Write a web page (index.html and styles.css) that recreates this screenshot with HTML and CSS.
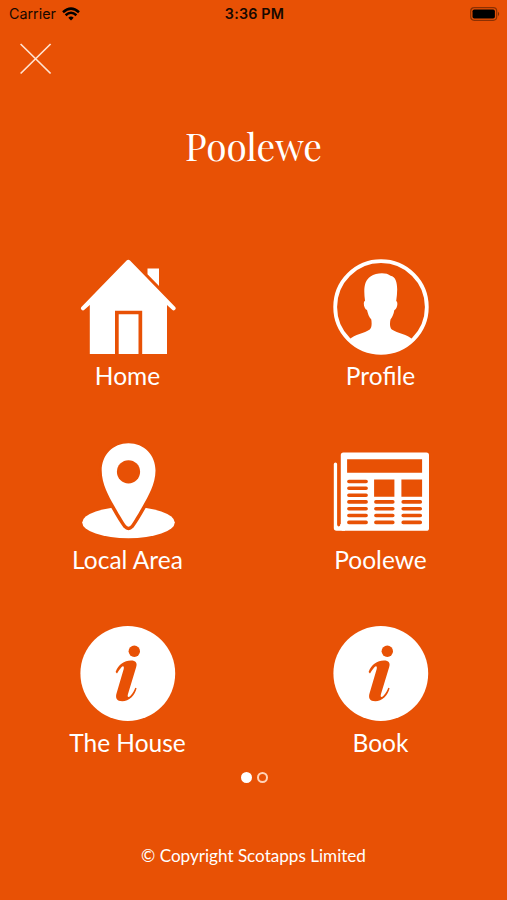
FILE: index.html
```html
<!DOCTYPE html>
<html lang="en">
<head>
  <meta charset="UTF-8" />
  <meta name="viewport" content="width=device-width, initial-scale=1" />
  <title>Poolewe</title>
  <link rel="stylesheet" href="styles.css">
</head>
<body>
  <div class="status-bar">
    <div class="status-left">
      <span>Carrier</span>
      <svg class="wifi" viewBox="0 0 18 14">
        <path d="M9 13.5 L6.3 10.7 Q9 8.5 11.7 10.7 Z" fill="#000" />
        <path d="M3.6 8.2 Q9 3.4 14.4 8.2 M1 5.2 Q9 -2 17 5.2" fill="none" stroke="#000" stroke-width="2.5" />
      </svg>
    </div>
    <div class="status-time">3:36 PM</div>
    <div class="status-right">
      <svg class="battery" viewBox="0 0 30 14">
        <rect x="0.7" y="0.7" width="26" height="12.6" rx="3.5" fill="none" stroke="#000" stroke-opacity="0.4" stroke-width="1.2" />
        <rect x="2.5" y="2.5" width="22.4" height="9" rx="1.8" />
        <path d="M28 4.8 Q30.4 7 28 9.2 Z" fill-opacity="0.45" />
      </svg>
    </div>
  </div>

  <button class="close-btn" aria-label="Close">
    <svg viewBox="0 0 32 32"><path d="M0.6 1 L30.6 30.5 M30.6 1 L0.6 30.5" /></svg>
  </button>

  <h1>Poolewe</h1>

  <nav class="menu">
    <a href="#" class="menu-item">
      <svg class="icon" viewBox="0 0 96 96">
        <path d="M46.600 1.600 Q48.300 0 50 1.600 L95.200 48 Q96.400 49.500 95 50.800 Q93.600 52 92.200 50.800 L87 46 V95 H62.200 V51.700 H35 V95 H9.800 V46 L4.400 50.800 Q3 52 1.600 50.800 Q0.200 49.500 1.400 48 Z" />
        <path d="M38.700 55.300 H58.500 V95 H38.700 Z M67.500 9.500 H79 V27 L67.500 15.200 Z" />
      </svg>
      <span>Home</span>
    </a>
    <a href="#" class="menu-item">
      <svg class="icon" viewBox="0 0 96 96">
        <circle cx="48" cy="48" r="45.800" fill="none" stroke="#fff" stroke-width="3.800" />
        <path d="M16.500 80.500 C21.500 75 31.500 74.500 36.800 70.500 C39 68.500 38.800 64 38.300 60.500 C36 58 34.800 54.500 34 51 C31 50 29.700 43 32 41.800 C30.500 30 31 22 37.500 17.500 C43.500 13.500 53.500 13.300 57.500 16.800 C65 18 65 30 63.200 42 C65.500 43 64.100 50.500 61.300 51.300 C60.700 55 59.500 58 57.500 60.500 C56.800 64 56.500 68.500 58.800 70.500 C64.500 74.500 74.500 75 79.500 80.500 C62.500 98.500 33.500 98.500 16.500 80.500 Z" />
      </svg>
      <span>Profile</span>
    </a>
    <a href="#" class="menu-item">
      <svg class="icon" viewBox="0 0 96 96">
        <ellipse cx="48.500" cy="79.500" rx="46.300" ry="15.700" />
        <path class="pin" d="M48.500 1.700 C33 1.700 21.700 13 21.700 28.500 C21.700 42 29 54.500 34 63.500 C38.500 71.500 43 79 46 82.800 Q48.500 85.500 51 82.800 C54 79 58.500 71.500 63 63.500 C68 54.500 75.500 42 75.500 28.500 C75.500 13 64 1.700 48.500 1.700 Z" />
        <path d="M48.500 0.200 C33 0.200 21.700 12 21.700 27.500 C21.700 41 29 53.500 34 62.500 C38.500 70.500 43 78 46 82.300 Q48.500 85 51 82.300 C54 78 58.500 70.500 63 62.500 C68 53.500 75.500 41 75.500 27.500 C75.500 12 64 0.200 48.500 0.200 Z" />
        <circle class="cut" cx="48.500" cy="28.800" r="11.600" />
      </svg>
      <span>Local Area</span>
    </a>
    <a href="#" class="menu-item">
      <svg class="icon" viewBox="0 0 96 96">
        <rect x="7.800" y="9.500" width="88.200" height="78.300" rx="2.600" />
        <path d="M0.800 21 Q0.800 19.500 2.500 19.500 Q4.100 19.500 4.100 21 V81.500 Q4.300 83.500 5.800 83.500 Q7.400 83.300 7.400 81 L12 80 V87.800 H3.600 Q0.800 87.800 0.800 85 Z" />
        <path class="cut" d="M14.100 16.200 H89.100 V29.800 H14.100 Z M41.100 36.500 H61.400 V53.800 H41.100 Z M68.400 36.500 H89.100 V53.800 H68.400 Z" />
        <path class="lines" d="M15.900 38.500 H33.100 M15.900 45.200 H33.100 M15.900 52.200 H33.100 M15.900 58.900 H33.100 M15.900 65.700 H33.100 M15.900 72.500 H33.100 M15.900 79.400 H33.100 M42.900 58.900 H59.800 M42.900 65.700 H59.800 M42.900 72.500 H59.800 M42.900 79.400 H59.800 M70.200 58.900 H87.300 M70.200 65.700 H87.300 M70.200 72.500 H87.300 M70.200 79.400 H87.300" />
      </svg>
      <span>Poolewe</span>
    </a>
    <a href="#" class="menu-item">
      <svg class="icon" viewBox="0 0 96 96">
        <circle cx="47.800" cy="47.500" r="47.400" />
        <circle class="cut" cx="54.300" cy="25.300" r="5.700" />
        <path class="cut" d="M35.600 46 C38.500 38.500 44 34.500 51 34.500 C55.800 34.500 57.500 37 56.200 41 L48 68 C47 71.500 48.500 71.800 50.500 69.800 C53 67 54.300 64.500 55.300 61.700 L56.600 62.300 C55 69.500 49 75.200 42.300 75.200 C36.700 75.200 35.200 72 36.500 67.500 L43.700 43 C44.300 40 43 39.500 41.200 41.500 C39.500 43.300 38.100 45.500 37 47.500 Z" />
      </svg>
      <span>The House</span>
    </a>
    <a href="#" class="menu-item">
      <svg class="icon" viewBox="0 0 96 96">
        <circle cx="47.800" cy="47.500" r="47.400" />
        <circle class="cut" cx="54.300" cy="25.300" r="5.700" />
        <path class="cut" d="M35.600 46 C38.500 38.500 44 34.500 51 34.500 C55.800 34.500 57.500 37 56.200 41 L48 68 C47 71.500 48.500 71.800 50.500 69.800 C53 67 54.300 64.500 55.300 61.700 L56.600 62.300 C55 69.500 49 75.200 42.300 75.200 C36.700 75.200 35.200 72 36.500 67.500 L43.700 43 C44.300 40 43 39.500 41.200 41.500 C39.500 43.300 38.100 45.500 37 47.500 Z" />
      </svg>
      <span>Book</span>
    </a>
  </nav>

  <div class="dots">
    <span class="dot active"></span>
    <span class="dot"></span>
  </div>

  <footer>© Copyright Scotapps Limited</footer>
</body>
</html>
```

FILE: styles.css
```css
body {
  margin: 0;
  height: 900px;
  display: flex;
  flex-direction: column;
  overflow: hidden;
  background-color: #e85105;
  color: #fff;
  font-family: Lato, sans-serif;
}
.status-bar {
  display: grid;
  grid-template-columns: 1fr auto 1fr;
  align-items: center;
  height: 27px;
  padding: 0 7px 0 9px;
  font-family: Inter, sans-serif;
  font-size: 14.3px;
  color: #160800;
}
.status-left {
  display: flex;
  align-items: center;
  gap: 6px;
}
.status-time {
  font-weight: 600;
  letter-spacing: 0.2px;
}
.status-right {
  display: flex;
  justify-content: flex-end;
}
.wifi {
  width: 18px;
  height: 14px;
}
.battery {
  width: 30px;
  height: 14px;
}
.close-btn {
  width: 32px;
  height: 32px;
  margin: 16px 0 0 20px;
  padding: 0;
  border: none;
  background: none;
  cursor: pointer;
}
.close-btn svg {
  display: block;
}
.close-btn path {
  fill: none;
  stroke: #ffe3d2;
  stroke-width: 1.7;
}
h1 {
  margin: 46px 0 0;
  height: 50px;
  line-height: 50px;
  text-align: center;
  font-family: 'Playfair Display', 'Liberation Serif', serif;
  font-size: 37px;
  font-weight: 400;
}
.menu {
  display: grid;
  grid-template-columns: 1fr 1fr;
  grid-auto-rows: 183.5px;
  margin-top: 88px;
  padding-left: 1px;
}
.menu-item {
  display: flex;
  flex-direction: column;
  align-items: center;
  color: #fff;
  text-decoration: none;
  font-size: 24.5px;
  line-height: 30px;
}
.icon {
  width: 96px;
  height: 96px;
  margin-bottom: 6px;
  fill: #fff;
}
.icon .cut {
  fill: #e85105;
}
.icon .pin {
  stroke: #e85105;
  stroke-width: 6;
}
.icon .lines {
  fill: none;
  stroke: #e85105;
  stroke-width: 3.6;
  stroke-linecap: round;
}
.dots {
  display: flex;
  justify-content: center;
  gap: 5px;
  margin-top: -37.5px;
  padding-left: 2px;
}
.dot {
  width: 11px;
  height: 11px;
  box-sizing: border-box;
  border: 2px solid #ffd3b8;
  border-radius: 50%;
}
.dot.active {
  background-color: #fff;
  border-color: #fff;
}
footer {
  margin-top: 61.5px;
  text-align: center;
  font-size: 17.1px;
  line-height: 22px;
}
```
